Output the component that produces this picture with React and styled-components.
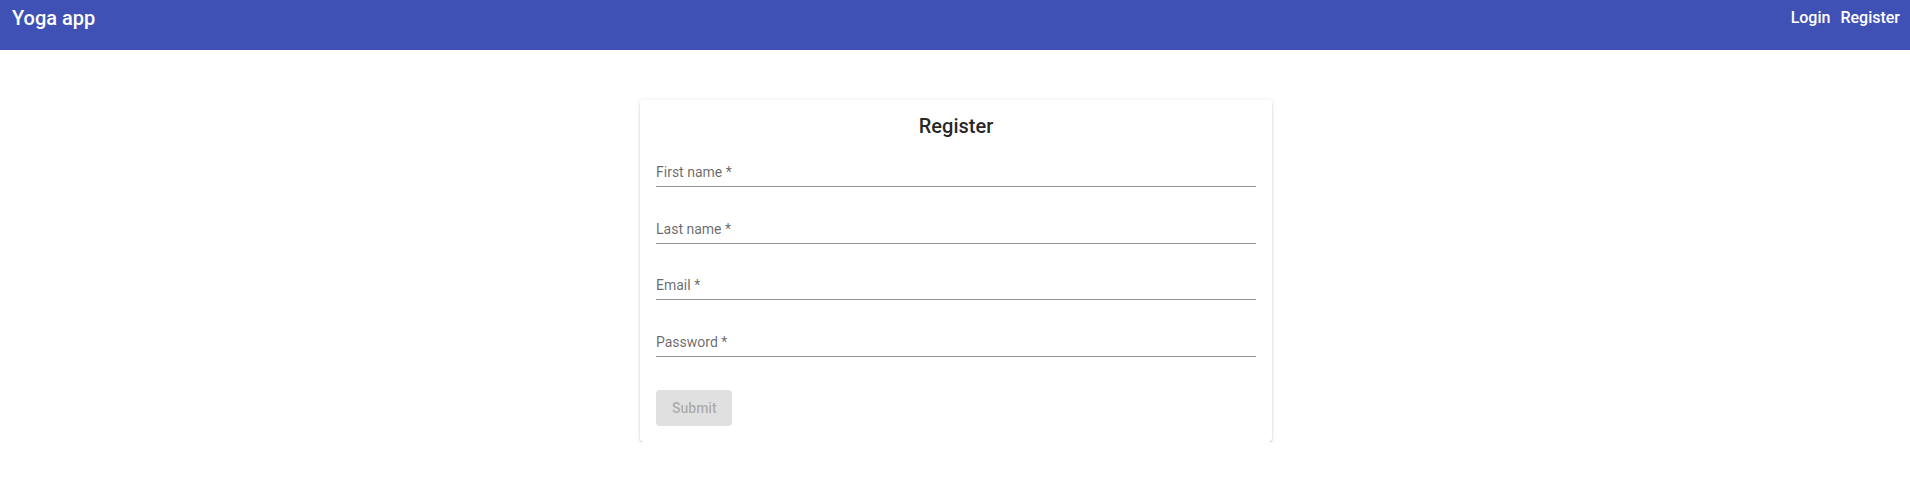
import React from "react";
import styled, { createGlobalStyle } from "styled-components";

const Global = createGlobalStyle`
  html, body { margin: 0; padding: 0; background: #fff; }
  body { font-family: Roboto, "Helvetica Neue", sans-serif; color: rgba(0,0,0,0.87); }
`;

const Toolbar = styled.header`
  height: 50px;
  box-sizing: border-box;
  background: #3f51b5;
  color: #fff;
  display: flex;
  align-items: flex-start;
  justify-content: space-between;
  padding: 0 10px 0 12px;
`;

const Brand = styled.span`
  font-size: 20px;
  font-weight: 500;
  line-height: 24px;
  padding-top: 6px;
`;

const Nav = styled.nav`
  display: flex;
  gap: 10px;
  padding-top: 6px;
`;

const NavLink = styled.a`
  font-size: 16px;
  font-weight: 500;
  line-height: 24px;
  color: #fff;
  text-decoration: none;
  cursor: pointer;
`;

const Main = styled.main`
  display: flex;
  justify-content: center;
  padding: 50px 0 0 2px;
`;

const Card = styled.form`
  width: 632px;
  box-sizing: border-box;
  padding: 16px;
  background: #fff;
  border-radius: 4px;
  box-shadow: 0 3px 1px -2px rgba(0,0,0,.2), 0 2px 2px 0 rgba(0,0,0,.14), 0 1px 5px 0 rgba(0,0,0,.12);
  display: flex;
  flex-direction: column;
`;

const Title = styled.h2`
  margin: 0 0 28px;
  text-align: center;
  font-size: 20px;
  font-weight: 500;
  line-height: 20px;
  color: rgba(0,0,0,0.87);
`;

const Field = styled.label`
  display: block;
  padding-bottom: 6px;
  border-bottom: 1px solid #949494;
  margin-bottom: ${p => p.$gap}px;
  font-size: 14px;
  line-height: 16px;
  color: rgba(0,0,0,0.6);
`;

const Button = styled.button`
  align-self: flex-start;
  width: 76px;
  height: 36px;
  border: none;
  border-radius: 4px;
  background: #e0e0e0;
  color: rgba(0,0,0,0.26);
  font-family: Roboto, sans-serif;
  font-size: 14px;
  font-weight: 500;
  padding: 0 16px;
  cursor: default;
`;

const fields = [
  { label: "First name *", gap: 34 },
  { label: "Last name *", gap: 33 },
  { label: "Email *", gap: 34 },
  { label: "Password *", gap: 33 },
];

export default function App() {
  return (
    <>
      <Global />
      <Toolbar>
        <Brand>Yoga app</Brand>
        <Nav>
          <NavLink>Login</NavLink>
          <NavLink>Register</NavLink>
        </Nav>
      </Toolbar>
      <Main>
        <Card onSubmit={e => e.preventDefault()}>
          <Title>Register</Title>
          {fields.map(f => (
            <Field key={f.label} $gap={f.gap}>{f.label}</Field>
          ))}
          <Button type="submit" disabled>Submit</Button>
        </Card>
      </Main>
    </>
  );
}
